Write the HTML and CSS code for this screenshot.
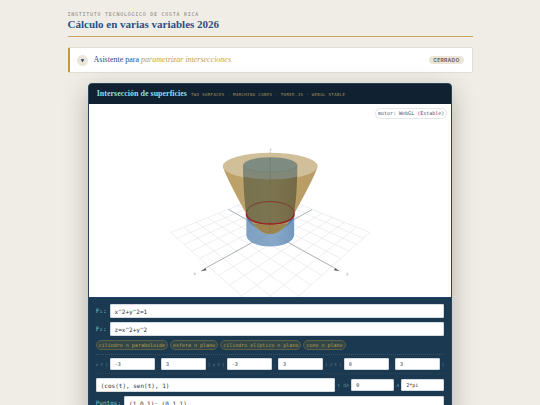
FILE: index.html
```html
<!DOCTYPE html>
<html lang="es">
<head>
<meta charset="utf-8">
<meta name="viewport" content="width=device-width, initial-scale=1">
<title>Cálculo en varias variables 2026</title>
<link rel="stylesheet" href="styles.css">
</head>
<body>
<div class="page">
  <header class="masthead">
    <p class="eyebrow">INSTITUTO TECNOLÓGICO DE COSTA RICA</p>
    <h1>Cálculo en varias variables 2026</h1>
  </header>

  <section class="assistant">
    <button class="toggle" type="button" aria-label="Abrir asistente"><svg viewBox="0 0 12 12" aria-hidden="true"><path d="M4 4.500h4L6 8z"/></svg></button>
    <h2>Asistente para <em>parametrizar intersecciones</em></h2>
    <span class="status">CERRADO</span>
  </section>

  <main class="app">
    <div class="app-head">
      <h2>Intersección de superficies</h2>
      <span class="tagline">TWO SURFACES · MARCHING CUBES · THREE.JS · WEBGL STABLE</span>
    </div>

    <div class="viewer">
      <svg class="scene" viewBox="88 104 364 194" role="img" aria-label="Cilindro y paraboloide">
        <defs>
          <linearGradient id="bowl" x1="0" x2="1" y1="0" y2="0">
            <stop offset="0" stop-color="#b89a5c"/><stop offset=".3" stop-color="#b79c63"/><stop offset="1" stop-color="#b4965a"/>
          </linearGradient>
          <linearGradient id="tube" x1="0" x2="1" y1="0" y2="0">
            <stop offset="0" stop-color="#7196bb"/><stop offset=".6" stop-color="#7c9fc3"/><stop offset="1" stop-color="#648db6"/>
          </linearGradient>
          <linearGradient id="core" x1="0" x2="1" y1="0" y2="0">
            <stop offset="0" stop-color="#77714f"/><stop offset=".5" stop-color="#7d7550"/><stop offset="1" stop-color="#746b46"/>
          </linearGradient>
        </defs>
        <g id="grid" class="grid"></g>
        <path class="axis" d="M228 210L337 270M312 210L203 270M270 233V152"/>
        <path class="arrow" d="M200 272l5-3 1 2zM340 272l-5-3-1 2z"/>
        <path fill="url(#tube)" fill-opacity=".9" d="M246 216V235C246 242 256 247 270 247S294 242 294 235V216Z"/>
        <path fill="#376b9b" fill-opacity=".6" d="M246 216C248 221 252 224 259 225L263 231C254 228 248 224 246 217ZM294 216C292 221 288 224 281 225L277 231C286 228 292 224 294 217Z"/>
        <path fill="url(#bowl)" fill-opacity=".94" d="M222.500 167C226 178 236 196 248 218C255 229 262 234.500 270 234.500S285 229 292 218C304 196 314 178 317.500 167Z"/>
        <ellipse cx="270" cy="166.500" rx="47.500" ry="13.500" fill="#d0bf98"/>
        <path fill="url(#core)" d="M243 166V172C243 192 245 207 246 215C249 223 259 225 270 225S291 223 294 215C295 207 297 192 297 172V166Z"/>
        <path fill="#818878" d="M243 166V176.500C251 180.700 289 180.700 297 176.500V166Z"/>
        <ellipse cx="270" cy="165" rx="27" ry="7.500" fill="#7e8b80"/>
        <path fill="none" stroke="#707d72" stroke-width=".5" d="M243 165C243 175 297 175 297 165"/>
        <path fill="#9d8350" d="M253 224Q270 226.500 287 224C282 231 276 234.500 270 234.500S258 231 253 224Z"/>
        <path class="inner-axis" d="M270 158V233"/>
        <path class="curve-back" d="M246 214C246 198 294 198 294 214"/>
        <path class="curve-front" d="M246 214C246 228 294 228 294 214"/>
        <g class="axis-label"><text x="193" y="276">x</text><text x="346" y="276">y</text><text x="269" y="151">z</text></g>
      </svg>
      <span class="engine">motor: WebGL (Estable)</span>
    </div>

    <form class="controls">
      <div class="row"><label for="f1">F₁:</label><input id="f1" class="field" value="x^2+y^2=1"></div>
      <div class="row"><label for="f2">F₂:</label><input id="f2" class="field" value="z=x^2+y^2"></div>
      <div class="chips">
        <button type="button">cilindro ∩ paraboloide</button>
        <button type="button">esfera ∩ plano</button>
        <button type="button">cilindro elíptico ∩ plano</button>
        <button type="button">cono ∩ plano</button>
      </div>
      <div class="ranges">
        <label for="x0">x ∈ [</label><input id="x0" value="-3"><label for="x1">,</label><input id="x1" value="3">
        <label for="y0">] y ∈ [</label><input id="y0" value="-3"><label for="y1">,</label><input id="y1" value="3">
        <label for="z0">] z ∈ [</label><input id="z0" value="0"><label for="z1">,</label><input id="z1" value="3"><span>]</span>
      </div>
      <div class="curve">
        <input class="field" aria-label="Curva" value="(cos(t), sen(t), 1)">
        <label for="t0">t de</label><input id="t0" class="limit" value="0"><label for="t1">a</label><input id="t1" class="limit" value="2*pi">
      </div>
      <div class="row"><label for="pts">Puntos:</label><input id="pts" class="field" value="(1,0,1); (0,1,1)"></div>
    </form>
  </main>
</div>
<script src="scene.js"></script>
</body>
</html>
```
FILE: styles.css
```css
* { box-sizing: border-box; }
body {
  margin: 0;
  height: 100vh;
  overflow: hidden;
  background: #f0ede6;
  font-family: "DejaVu Sans Mono", monospace;
}
h1, h2, p { margin: 0; }
button, input { font-family: inherit; margin: 0; }
.page { width: 75%; margin: 0 auto; padding-top: 10px; }
.masthead { border-bottom: 1px solid #c9a55c; padding-bottom: 5px; }
.eyebrow { font-size: 5px; line-height: 8px; letter-spacing: .15em; color: #858078; }
h1 { font: bold 11px/13px "Liberation Serif", serif; color: #275087; }
.assistant {
  display: flex;
  align-items: center;
  gap: 6px;
  height: 26px;
  margin: 10px 0;
  padding: 0 8px 0 7px;
  background: #fff;
  border: 1px solid #e3dfd6;
  border-left: 2px solid #c49a3c;
  border-radius: 2px;
}
.toggle { width: 11px; height: 11px; padding: 0; border: 0; border-radius: 50%; background: #eae6da; display: flex; }
.toggle svg { width: 100%; height: 100%; fill: #1b4069; }
.assistant h2 { flex: 1; font: 8px/12px "Liberation Serif", serif; color: #275087; }
.assistant em { color: #c9a04c; }
.status { font: bold 5px/8px Inter, sans-serif; letter-spacing: .05em; color: #6b665c; background: #ece5d6; border-radius: 4px; padding: 0 4px; }
.app {
  width: 90%;
  margin: 0 auto;
  border: 1px solid #26435b;
  border-radius: 4px;
  overflow: hidden;
  background: #1b3a52;
  box-shadow: 0 8px 24px rgba(40, 35, 30, .3);
}
.app-head { display: flex; align-items: center; gap: 4px; height: 20px; padding: 0 8px; background: #102232; }
.app-head h2 { font: bold 8px/12px "Liberation Serif", serif; color: #8fdde0; white-space: nowrap; }
.tagline { font-size: 4px; letter-spacing: .1em; color: #a8935a; }
.viewer { position: relative; background: #fff; border-bottom: 1px solid #1d4468; }
.scene { display: block; width: 100%; }
.grid { fill: none; stroke: #dfe3e9; stroke-width: .6; }
.axis { fill: none; stroke: #858b94; stroke-width: .6; }
.inner-axis { stroke: #5b614e; stroke-width: .4; opacity: .6; }
.arrow { fill: #555; }
.curve-back { fill: none; stroke: #7d3529; stroke-width: .9; }
.curve-front { fill: none; stroke: #9c1f22; stroke-width: 1.6; }
.axis-label { font-size: 4px; fill: #8b8f98; }
.engine {
  position: absolute;
  top: 4px;
  right: 4px;
  padding: 0 2px;
  border: 1px solid #e2e5e9;
  border-radius: 6px;
  background: #fff;
  font-size: 5px;
  line-height: 9px;
  color: #40566c;
}
.controls { display: grid; grid-template-columns: minmax(0, 1fr); gap: 4px; padding: 6px 7px; }
.row, .curve, .ranges { display: flex; align-items: center; }
.row { gap: 3px; }
.row label { font-size: 6px; line-height: 8px; color: #7fc4ce; }
input {
  min-width: 0;
  height: 12px;
  padding: 0 4px;
  border: 1px solid #d3dbe1;
  border-radius: 1px;
  background: #fff;
  color: #26333e;
  font-size: 5px;
}
.field { flex: 1; height: 14px; font-size: 6px; }
.chips { display: flex; gap: 2px; }
.chips button { height: 10px; padding: 0 2px; border: 1px solid #5b5f49; border-radius: 5px; background: #334647; color: #bb9f51; font-size: 5px; line-height: 8px; }
.ranges { gap: 2px; padding: 3px 0; border-top: 1px dotted #34536a; border-bottom: 1px dotted #24465e; font-size: 4px; color: #5c8799; white-space: nowrap; }
.ranges input { flex: 1; }
.curve { gap: 2px; font-size: 5px; color: #5c8799; }
.limit { width: 43px; }
```
FILE: scene.js
```js
// Floor grid in perspective: a and b run from -1 to 1 across the plane.
const DIVISIONS = 10;
const project = (a, b) => {
  const depth = 1 - 0.19 * (a + b);
  return `${270 + 50 * (a - b) / depth} ${233 + 27.7 * (a + b) / depth}`;
};
let d = '';
for (let i = 0; i <= DIVISIONS; i++) {
  const t = -1 + 2 * i / DIVISIONS;
  d += `M${project(-1, t)}L${project(1, t)}M${project(t, -1)}L${project(t, 1)}`;
}
const path = document.createElementNS('http://www.w3.org/2000/svg', 'path');
path.setAttribute('d', d);
document.getElementById('grid').append(path);
```
